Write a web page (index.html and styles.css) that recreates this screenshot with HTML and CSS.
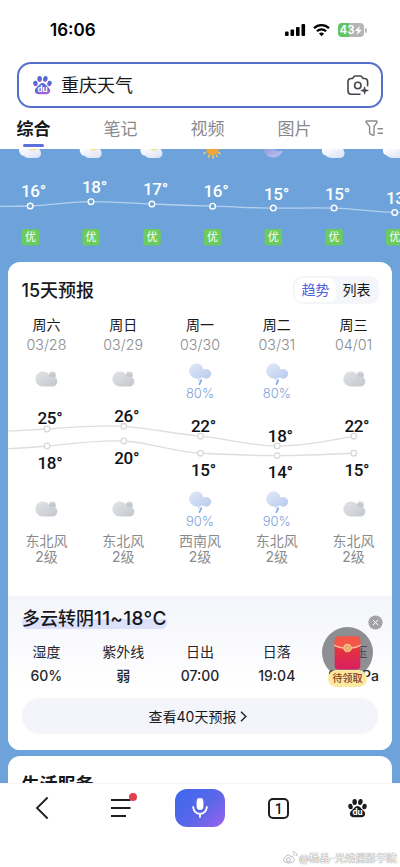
FILE: index.html
```html
<!DOCTYPE html>
<html lang="zh-CN">
<head>
<meta charset="utf-8">
<meta name="viewport" content="width=device-width, initial-scale=1">
<title>重庆天气</title>
<link rel="stylesheet" href="styles.css">
</head>
<body>
<svg class="defs" width="0" height="0" aria-hidden="true">
  <defs>
    <linearGradient id="grayCloud" x1="0" y1="0" x2="1" y2="1"><stop offset="0" stop-color="#e2e4e7"/><stop offset="1" stop-color="#c3c7cc"/></linearGradient>
    <linearGradient id="grayBack" x1="0" y1="0" x2="0" y2="1"><stop offset="0" stop-color="#d5d8dd"/><stop offset="1" stop-color="#b3b8c1"/></linearGradient>
    <linearGradient id="blueCloud" x1="0" y1="0" x2="1" y2="1"><stop offset="0" stop-color="#e2e9f8"/><stop offset="1" stop-color="#b8caec"/></linearGradient>
    <linearGradient id="whiteCloud" x1="0" y1="0" x2="1" y2="1"><stop offset="0" stop-color="#ffffff"/><stop offset="1" stop-color="#d9e0f7"/></linearGradient>
    <linearGradient id="moonFill" x1="0" y1="0" x2="1" y2="1"><stop offset="0" stop-color="#8d9fdf"/><stop offset="1" stop-color="#c5c4f2"/></linearGradient>
    <linearGradient id="pawFill" x1="0" y1="0" x2=".3" y2="1"><stop offset="0" stop-color="#4a6fd8"/><stop offset=".6" stop-color="#5266d6"/><stop offset="1" stop-color="#a063e0"/></linearGradient>
    <linearGradient id="packet" x1="0" y1="0" x2="0" y2="1"><stop offset="0" stop-color="#f2483f"/><stop offset=".5" stop-color="#e02f45"/><stop offset="1" stop-color="#d91f63"/></linearGradient>
    <symbol id="cloud" viewBox="0 0 24 24">
      <circle cx="18.400" cy="8" r="3.400" fill="url(#grayBack)"/>
      <path d="M8.800 4.500c3.500 0 6.300 2.100 7.300 5.200.6-.2 1.300-.3 2-.3a5.050 5.050 0 0 1 .4 10.100H8.800a7.500 7.500 0 0 1 0-15z" fill="url(#grayCloud)"/>
    </symbol>
    <symbol id="rain" viewBox="0 0 24 24">
      <path d="M8.200 1.300c3.700 0 6.700 2.700 7.200 6.200.8-.4 1.700-.6 2.700-.6a4.900 4.900 0 1 1-3.300 8.400c-1.300 1.200-3 1.900-6.600 1.200a7.620 7.620 0 0 1 0-15.200z" fill="url(#blueCloud)"/>
      <path d="M13.300 18.200l-1.800 4" stroke="#85a6e4" stroke-width="1.600" stroke-linecap="round"/>
      <path d="M11 17.800l-.2.500" stroke="#a9c0ec" stroke-width="1.200" stroke-linecap="round"/>
    </symbol>
    <symbol id="paw" viewBox="0 0 20 20">
      <ellipse cx="2.600" cy="8.400" rx="2.300" ry="3" transform="rotate(-12 2.600 8.400)"/>
      <ellipse cx="7" cy="3.700" rx="2.400" ry="3.200"/>
      <ellipse cx="13" cy="3.700" rx="2.400" ry="3.200" transform="rotate(8 13 3.700)"/>
      <ellipse cx="17.400" cy="8.400" rx="2.300" ry="3" transform="rotate(12 17.400 8.400)"/>
      <path d="M10 8c2.100 0 3 1.500 4.200 2.900 1.500 1.700 3.900 2.700 3.900 5.200 0 2.200-1.900 3.800-3.900 3.800H5.800c-2 0-3.900-1.600-3.900-3.800 0-2.500 2.400-3.500 3.900-5.200C7 9.500 7.900 8 10 8z"/>
    </symbol>
  </defs>
</svg>
<div class="phone">
  <header class="top">
    <div class="status">
      <span class="time">16:06</span>
      <span class="signals">
        <svg width="21" height="14" viewBox="0 0 21 14"><rect x="0" y="8.500" width="3.600" height="4.500" rx="1"/><rect x="5.500" y="6.500" width="3.600" height="6.500" rx="1"/><rect x="11" y="4" width="3.600" height="9" rx="1"/><rect x="16.500" y="1" width="3.600" height="12" rx="1"/></svg>
        <svg class="wifi" width="17" height="14" viewBox="0 0 17 14" fill="none" stroke="#000" stroke-width="2.300"><path d="M1 5.100a10.700 10.700 0 0 1 15 0"/><path d="M3.900 8.200a6.600 6.600 0 0 1 9.200 0"/><path d="M8.500 13.200l-2.500-2.600a3.600 3.600 0 0 1 5 0z" fill="#000" stroke="none"/></svg>
        <span class="battery">43<svg width="7" height="9" viewBox="0 0 7 9"><path d="M4.800 0L0 5h2.800L2 9l5-5.300H4z" fill="#fff"/></svg></span><i class="cap"></i>
      </span>
    </div>
    <div class="search">
      <svg class="logo" width="19" height="20" viewBox="0 0 20 20" fill="url(#pawFill)"><use href="#paw"/><text class="du" x="10" y="17.600" text-anchor="middle" fill="#fff">du</text></svg>
      <span class="query">重庆天气</span>
      <svg class="camera" width="22" height="21" viewBox="0 0 22 21" fill="none" stroke="#45474d" stroke-width="1.600"><path d="M13.500 19.200H4.200A3.200 3.200 0 0 1 1 16V6.700a3.200 3.200 0 0 1 3.200-3.200h1.300l1.300-1.700c.4-.5.9-.8 1.500-.8h5c.6 0 1.100.3 1.500.8l1.300 1.700h1.300a3.200 3.200 0 0 1 3.200 3.200v4.600"/><circle cx="10.800" cy="10.500" r="3.200"/><path d="M17.600 11.800c.4 2.600 1 3.200 3.700 3.700-2.700.5-3.300 1.100-3.700 3.700-.4-2.600-1-3.200-3.700-3.700 2.700-.5 3.300-1.100 3.700-3.700z" fill="#45474d" stroke="#45474d" stroke-width=".8"/></svg>
    </div>
    <nav class="tabs">
      <span class="tab active">综合</span><span class="tab">笔记</span><span class="tab">视频</span><span class="tab">图片</span>
      <svg class="filter" width="19" height="17" viewBox="0 0 19 17" fill="none" stroke="#8b8b8f" stroke-width="1.400"><path d="M1.800 1h9.600c.7 0 1 .8.600 1.300L9 6.500v8.200c0 .5-.5.800-1 .6l-3-1.500c-.3-.1-.4-.3-.4-.6V6.500L1.200 2.300C.8 1.800 1.100 1 1.800 1zM12.500 8.800H18M12.500 13.200H18"/></svg>
    </nav>
  </header>

  <main class="page">
    <svg class="hourly" width="400" height="113" viewBox="0 149 400 113">
      <g>
        <g id="dayCloud"><path d="M19 149h20c3 2.500 3 8.800-2.500 9h-8c-2 0-3.500-.8-4.500-2.200-3 .2-5-2.800-5-6.800z" fill="url(#whiteCloud)"/><path d="M29 149h8c-1 2.200-7 2.200-8 0z" fill="#f5df98"/></g>
        <use href="#dayCloud" x="60.700"/><use href="#dayCloud" x="121.400"/>
        <path d="M206 149h13a6.500 6.500 0 0 1-13 0z" fill="#efa53b"/>
        <path d="M204 153.500l1.300-.8M208.500 157l.5-1.500M213 158v-2M217 156.500l-.6-1.200M220 153.700l-1.500-1" stroke="#f4cd61" stroke-width="1.500" stroke-linecap="round"/>
        <path d="M263.500 149c1 10 15.500 12 19.500 1.500-3 1.500-7 .8-9-1.500z" fill="url(#moonFill)"/>
        <path id="nightCloud" d="M322 149h21c3 4 1.500 9-3 9h-8c-3 0-5-1-6-2.500-3-.2-4.500-3-4-6.500z" fill="url(#whiteCloud)"/>
        <use href="#nightCloud" x="61"/>
      </g>
      <path d="M0 206.300C12 206.500 20 206.300 30.200 206c20-.7 40-4.300 60.800-4.300s40 1.300 61 2.300 40 1.700 60.700 2.200 40 1.800 60.700 1.900 40-.4 60.700 0 40 4.100 65.600 4.400" fill="none" stroke="#b4d0ee" stroke-width="1.300"/>
      <g fill="#6da3da" stroke="#fff" stroke-width="1.400"><circle cx="30.200" cy="206" r="2.800"/><circle cx="91" cy="201.700" r="2.800"/><circle cx="151.900" cy="204" r="2.800"/><circle cx="212.600" cy="206.200" r="2.800"/><circle cx="273.300" cy="208.100" r="2.800"/><circle cx="334" cy="208.100" r="2.800"/><circle cx="394.700" cy="212.400" r="2.800"/></g>
      <g class="deg light"><text x="21" y="197.300">16°</text><text x="82" y="193">18°</text><text x="143" y="195.200">17°</text><text x="203.500" y="197.300">16°</text><text x="264" y="199.700">15°</text><text x="325" y="199.700">15°</text><text x="386" y="204">13°</text></g>
      <g fill="#6bcb5e"><rect x="21.800" y="229" width="17.500" height="16.500" rx="2.500"/><rect x="82.300" y="229" width="17.500" height="16.500" rx="2.500"/><rect x="143.200" y="229" width="17.500" height="16.500" rx="2.500"/><rect x="203.900" y="229" width="17.500" height="16.500" rx="2.500"/><rect x="264.600" y="229" width="17.500" height="16.500" rx="2.500"/><rect x="325.300" y="229" width="17.500" height="16.500" rx="2.500"/><rect x="386" y="229" width="17.500" height="16.500" rx="2.500"/></g>
      <g class="air"><text x="30.500" y="241.200">优</text><text x="91" y="241.200">优</text><text x="152" y="241.200">优</text><text x="212.600" y="241.200">优</text><text x="273.300" y="241.200">优</text><text x="334" y="241.200">优</text><text x="394.700" y="241.200">优</text></g>
    </svg>

    <section class="card forecast">
      <div class="head"><h2>15天预报</h2><div class="switch"><span class="on">趋势</span><span>列表</span></div></div>
      <div class="days">
        <div class="day"><b>周六</b><span>03/28</span></div>
        <div class="day"><b>周日</b><span>03/29</span></div>
        <div class="day"><b>周一</b><span>03/30</span></div>
        <div class="day"><b>周二</b><span>03/31</span></div>
        <div class="day"><b>周三</b><span>04/01</span></div>
      </div>
      <div class="icons">
        <div class="sky"><svg><use href="#cloud"/></svg></div>
        <div class="sky"><svg><use href="#cloud"/></svg></div>
        <div class="sky wet"><svg><use href="#rain"/></svg><span>80%</span></div>
        <div class="sky wet"><svg><use href="#rain"/></svg><span>80%</span></div>
        <div class="sky"><svg><use href="#cloud"/></svg></div>
      </div>
      <svg class="trend" width="384" height="86" viewBox="8 402 384 86">
        <g fill="none" stroke="#dedede" stroke-width="1.300"><path d="M8 431.200C22 430.500 34 429.800 47 429c25-1.500 51-4.300 76.800-2.700S175 434 200.500 436.200s51 9.800 76.700 9.800 51-5 76.600-9.800"/><path d="M8 448.800c14-.6 26-1.600 39-2.800 25-2.400 51-6.400 76.800-5s51 11 76.700 12.200 51 2.400 76.700 2.400 51-1.200 76.600-2.400"/></g>
        <g fill="#fff" stroke="#d9d9d9" stroke-width="1.300"><circle cx="47" cy="429" r="2.800"/><circle cx="123.800" cy="426.300" r="2.800"/><circle cx="200.500" cy="436.200" r="2.800"/><circle cx="277.200" cy="446" r="2.800"/><circle cx="353.800" cy="436.200" r="2.800"/><circle cx="47" cy="446" r="2.800"/><circle cx="123.800" cy="441" r="2.800"/><circle cx="200.500" cy="453.200" r="2.800"/><circle cx="277.200" cy="455.600" r="2.800"/><circle cx="353.800" cy="453.200" r="2.800"/></g>
        <g class="deg"><text x="37.500" y="424.200">25°</text><text x="114.200" y="422">26°</text><text x="191" y="431.700">22°</text><text x="267.800" y="441.700">18°</text><text x="344.400" y="431.700">22°</text><text x="37.500" y="469">18°</text><text x="114.200" y="464">20°</text><text x="191" y="476">15°</text><text x="267.800" y="478.300">14°</text><text x="344.400" y="476">15°</text></g>
      </svg>
      <div class="icons">
        <div class="sky"><svg><use href="#cloud"/></svg></div>
        <div class="sky"><svg><use href="#cloud"/></svg></div>
        <div class="sky wet"><svg><use href="#rain"/></svg><span>90%</span></div>
        <div class="sky wet"><svg><use href="#rain"/></svg><span>90%</span></div>
        <div class="sky"><svg><use href="#cloud"/></svg></div>
      </div>
      <div class="wind"><span>东北风<br>2级</span><span>东北风<br>2级</span><span>西南风<br>2级</span><span>东北风<br>2级</span><span>东北风<br>2级</span></div>
      <div class="detail">
        <h3>多云转阴<span class="range">11~18°C</span></h3>
        <div class="facts">
          <div><span>湿度</span><b>60%</b></div>
          <div><span>紫外线</span><b>弱</b></div>
          <div><span>日出</span><b>07:00</b></div>
          <div><span>日落</span><b>19:04</b></div>
          <div><span>气压</span><b>970hPa</b></div>
        </div>
        <div class="more">查看40天预报<svg width="7" height="11" viewBox="0 0 7 11" fill="none" stroke="#1f2024" stroke-width="1.400"><path d="M1 .8l4.800 4.700L1 10.200"/></svg></div>
      </div>
      <div class="gift">
        <svg class="close" width="15" height="15" viewBox="0 0 15 15"><circle cx="7.500" cy="7.500" r="7.100" fill="#a3a3a5"/><path d="M4.800 4.800l5.400 5.400M10.200 4.800l-5.400 5.400" stroke="#fff" stroke-width="1"/></svg>
        <div class="disc"><svg width="27" height="34" viewBox="0 0 27 34"><rect x=".7" y=".5" width="25.600" height="33" rx="4" fill="url(#packet)"/><path d="M.7 9c8 4 17.600 4 25.600 0V4.500a4 4 0 0 0-4-4H4.700a4 4 0 0 0-4 4z" fill="#f45648"/><path d="M.2 9c8 4.300 18.600 4.300 26.600 0" fill="none" stroke="#f8c6a4" stroke-width="1.300"/><circle cx="13.500" cy="12" r="4.300" fill="#f5c183"/><circle cx="13.500" cy="12" r="2" fill="none" stroke="#e58b56" stroke-width="1"/></svg></div>
        <span class="claim">待领取</span>
      </div>
    </section>
    <section class="card service"><h2>生活服务</h2></section>
  </main>

  <footer class="nav">
    <div class="buttons">
      <span><svg width="14" height="24" viewBox="0 0 14 24" fill="none" stroke="#1f1f1f" stroke-width="1.800"><path d="M12.600 1.500L2 12l10.600 10.500"/></svg></span>
      <span class="menu"><svg width="20" height="20" viewBox="0 0 20 20" stroke="#1f1f1f" stroke-width="1.800"><path d="M0 2h19.500M0 10h19.500M0 18h15"/></svg><i></i></span>
      <span><span class="mic"><svg width="18" height="20" viewBox="0 0 18 20"><rect x="5.600" y="0" width="6.800" height="12" rx="3.400" fill="#fff"/><path d="M2.200 9a6.800 6.800 0 0 0 13.600 0M9 15.800V19" fill="none" stroke="#fff" stroke-width="1.800" stroke-linecap="round"/></svg></span></span>
      <span><span class="windows">1</span></span>
      <span><svg width="19" height="20" viewBox="0 0 20 20" fill="#1c1c1c"><use href="#paw"/><text class="du" x="10" y="17.600" text-anchor="middle" fill="#fff">du</text></svg></span>
    </div>
    <div class="mark"><svg width="15" height="13" viewBox="0 0 15 13" fill="none" stroke="#bcbcbc" stroke-width="1"><path d="M5.500 4C3.500 4 .7 6.500.7 8.800c0 4.300 10.600 4.200 10.600-.3 0-1-.8-1.500-1.600-1.800.4-1.500-.8-2-2.700-1.200 0-.8-.4-1.500-1.500-1.500z"/><circle cx="5.500" cy="8.800" r="2"/><path d="M9.500 1c3-.7 5 1.500 4.200 4M10 3c1.300-.2 2 .6 1.800 1.600"/></svg>@杨晶-光线摄影学院</div>
  </footer>
</div>
</body>
</html>
```
FILE: styles.css
```css
* { box-sizing: border-box; }
body { margin: 0; font-family: Inter, "Noto Sans CJK SC", sans-serif; color: #17181c; background: #fff; }
h2, h3 { margin: 0; font-weight: 500; }
i { font-style: normal; }
svg { display: block; }
.defs { position: absolute; }
.phone { width: 400px; height: 867px; display: flex; flex-direction: column; overflow: hidden; }

.top { height: 149px; flex: none; background: #fff; display: flex; flex-direction: column; }
.status { height: 62px; padding: 19px 33px 0 50px; display: flex; justify-content: space-between; align-items: flex-start; }
.time { font-size: 17px; line-height: 22px; font-weight: 600; color: #000; }
.signals { display: flex; align-items: center; height: 22px; }
.wifi { margin-left: 7px; }
.battery { margin-left: 8px; width: 26px; height: 14px; border-radius: 4px; background: linear-gradient(90deg, #63c466 43%, #b5b5b5 43%); color: #fff; font-size: 11.500px; font-weight: 600; display: flex; align-items: center; justify-content: center; gap: 1px; }
.cap { width: 2px; height: 5px; margin-left: 1px; background: #b5b5b5; border-radius: 0 2px 2px 0; }
.search { height: 46px; margin: 0 17px; padding: 0 12px 0 13.500px; border: 2px solid #5470ca; border-radius: 14px; display: flex; align-items: center; flex: none; }
.query { margin: 2px 0 0 9.500px; font-size: 18px; line-height: 24px; flex: 1; }
.du { font: 700 9.500px Roboto, sans-serif; }
.tabs { height: 41px; padding: 0 16px 0 16.500px; display: flex; align-items: flex-start; gap: 53px; font-size: 17px; line-height: 43px; color: #88898d; }
.tab { flex: none; }
.active { color: #17181c; font-weight: 700; height: 39px; display: flex; flex-direction: column; align-items: center; }
.active::after { content: ""; width: 21px; height: 3px; border-radius: 1.5px; background: #5b70da; flex: none; margin-top: -7px; }
.filter { margin: 12px 0 0 auto; flex: none; }

.page { height: 634px; flex: none; overflow: hidden; background: #6da3da; }
.hourly { background: #6da3da; }
.deg { font: 500 17px Roboto, sans-serif; letter-spacing: -.3px; fill: #101116; }
.light { fill: #fff; }
.air { font: 11px "Noto Sans CJK SC", sans-serif; fill: #fff; text-anchor: middle; }
.card { margin: 0 8px; background: #fff; border-radius: 12px; }
.forecast { position: relative; height: 488px; display: flex; flex-direction: column; }
.head { display: flex; justify-content: space-between; align-items: center; padding: 14px 13px 0 13.500px; }
h2 { font-size: 18px; line-height: 28px; }
.head h2 { padding-top: 1px; line-height: 27px; }
.switch { display: flex; width: 86px; height: 28px; padding: 2px; background: #f5f6fa; border-radius: 9px; font-size: 14px; line-height: 24px; text-align: center; }
.switch span { flex: 1; }
.switch .on { background: #fff; border-radius: 7px; color: #4c61dc; }
.days, .icons, .wind, .facts { display: grid; grid-template-columns: repeat(5, 1fr); text-align: center; }
.days { margin-top: 11px; height: 40px; }
.day { display: flex; flex-direction: column; font-size: 14px; line-height: 20px; }
.day b { font-weight: 400; }
.day span { color: #8a8b8e; font-weight: 300; font-size: 14.300px; }
.icons { height: 47px; }
.sky { display: flex; flex-direction: column; align-items: center; padding-top: 12px; }
.sky svg { width: 24px; height: 24px; }
.wet { padding-top: 7px; }
.sky span { font-size: 13px; line-height: 16px; margin-top: -1px; color: #7c9fda; font-weight: 300; }
.trend { flex: none; }
.trend + .icons { height: 43px; }
.trend + .icons .sky { padding-top: 9px; }
.trend + .icons .wet { padding-top: 2px; }
.wind { margin-top: 2px; font-size: 14px; line-height: 15.500px; color: #8a8b8e; height: 63px; }
.detail { height: 154px; flex: none; background: linear-gradient(#f4f5fa, #fff 60%); border-radius: 0 0 12px 12px; padding: 11px 0 0; display: flex; flex-direction: column; }
h3 { align-self: flex-start; margin-left: 14px; font-size: 18px; line-height: 23px; height: 22px; background: linear-gradient(transparent 55%, #dce1f9 55%); border-radius: 6px; }
.range { font-size: 19px; letter-spacing: .3px; font-weight: 450; }
.facts { font-size: 14px; line-height: 24px; margin-top: 11px; color: #26272b; }
.facts div { display: flex; flex-direction: column; }
.facts b { font-weight: 500; }
.more { margin: 10px 14px 0; height: 36px; flex: none; border-radius: 18px; background: #f4f5fa; display: flex; align-items: center; justify-content: center; gap: 4px; font-size: 14px; padding-right: 4px; }
.gift { position: absolute; right: 9px; top: 353px; width: 61px; display: flex; flex-direction: column; }
.close { align-self: flex-end; }
.disc { width: 51px; height: 51px; border-radius: 50%; background: rgba(90, 92, 94, .68); margin-top: -3px; display: flex; align-items: center; justify-content: center; }
.claim { width: 39px; height: 17px; margin: -8px 0 0 6px; border-radius: 9px; background: #fbe9a0; color: #8b3a26; font-size: 10px; line-height: 16px; font-weight: 500; text-align: center; }
.service { margin-top: 6px; height: 80px; padding: 15px 13.500px; }
.service h2 { font-weight: 700; }

.nav { flex: 1; background: #fff; border-top: 1px solid #f4f4f6; display: flex; flex-direction: column; justify-content: space-between; }
.buttons { display: grid; grid-template-columns: repeat(5, 1fr); height: 48px; padding: 0 3px; }
.buttons > span { display: flex; align-items: center; justify-content: center; }
.menu { position: relative; }
.menu i { position: absolute; left: 47px; top: 9px; width: 8px; height: 8px; border-radius: 50%; background: #e2404f; }
.mic { width: 50px; height: 38px; border-radius: 12px; background: linear-gradient(135deg, #3b68ee, #5b67e8 55%, #9a62ee); display: flex; align-items: center; justify-content: center; }
.windows { width: 21px; height: 21px; border: 2px solid #1f1f1f; border-radius: 5px; font: 500 14px/18px Roboto, sans-serif; text-align: center; }
.mark { display: flex; justify-content: flex-end; align-items: center; gap: 1px; height: 20px; padding-right: 3px; font-size: 10.400px; color: #fff; text-shadow: 0 0 1px #777, 0 0 1px #999; }
```
